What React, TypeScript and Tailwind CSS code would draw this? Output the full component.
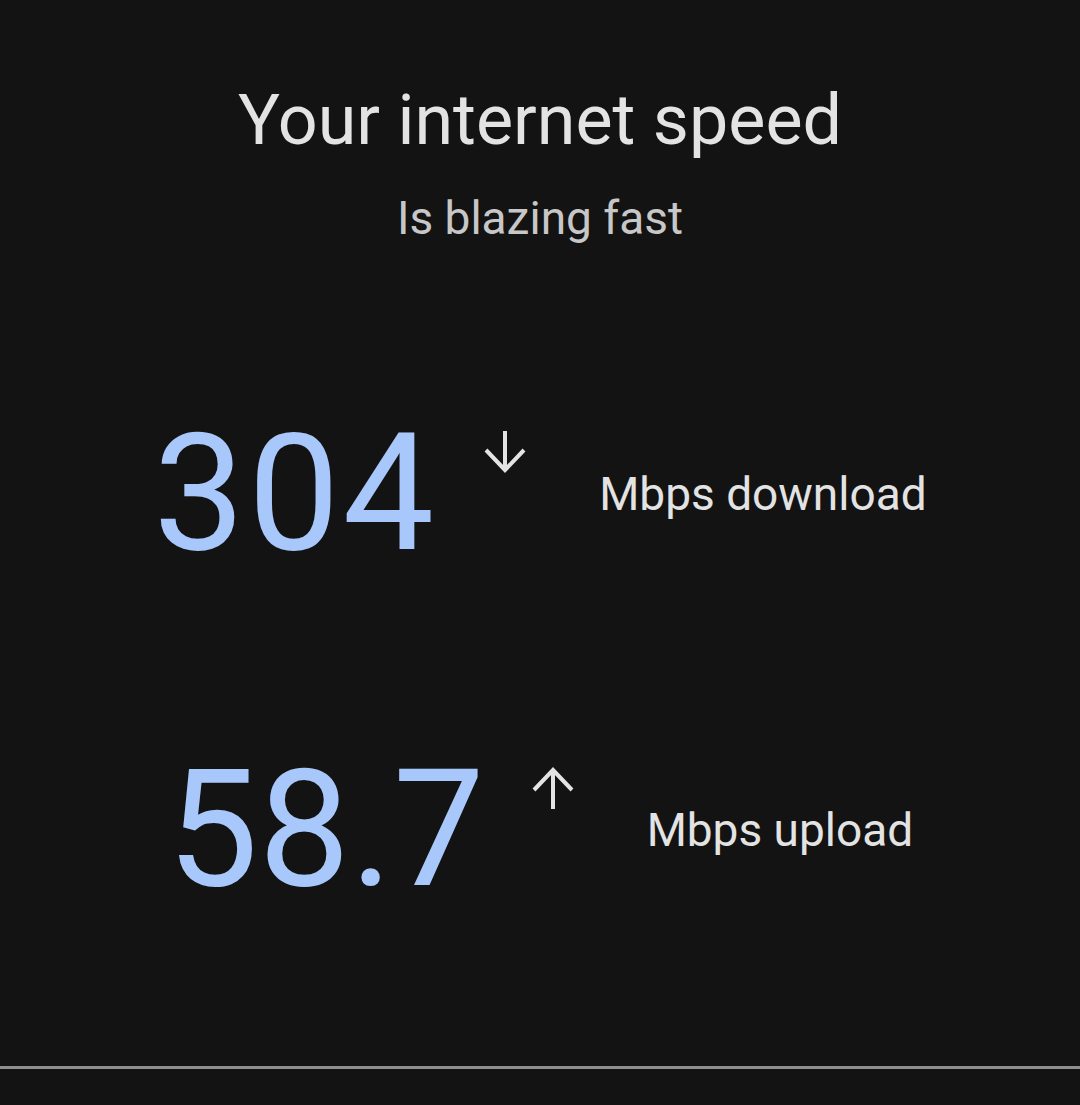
type Reading = {
  value: string
  unit: string
  dir: 'down' | 'up'
  tracking: string
}

const readings: Reading[] = [
  { value: '304', unit: 'Mbps download', dir: 'down', tracking: 'tracking-[3px]' },
  { value: '58.7', unit: 'Mbps upload', dir: 'up', tracking: 'tracking-normal' },
]

function Arrow({ dir }: { dir: 'down' | 'up' }) {
  return (
    <svg
      width="44"
      height="44"
      viewBox="0 0 44 44"
      fill="none"
      stroke="#e3e3e3"
      strokeWidth="4"
      className={dir === 'up' ? 'rotate-180' : ''}
    >
      <line x1="22" y1="1" x2="22" y2="40" />
      <polyline points="3,20 22,40 41,20" strokeLinejoin="miter" />
    </svg>
  )
}

function SpeedRow({ value, unit, dir, tracking }: Reading) {
  return (
    <div className="flex items-center justify-center">
      <span className={`text-[163px] leading-none text-[#a8c7fa] ${tracking}`}>{value}</span>
      <div className="ml-[46px] mr-[72px] self-start pt-[18px]">
        <Arrow dir={dir} />
      </div>
      <span className="text-[46px] leading-none text-[#e3e3e3]">{unit}</span>
    </div>
  )
}

export default function App() {
  return (
    <div className="flex h-[1105px] w-[1080px] flex-col bg-[#131313] font-['Roboto',sans-serif]">
      <header className="flex flex-col items-center pt-[85px]">
        <h1 className="text-[70px] leading-none text-[#e3e3e3]">Your internet speed</h1>
        <p className="mt-[40px] text-[46px] leading-none text-[#c7c7c7]">Is blazing fast</p>
      </header>
      <main className="mt-[171px] flex flex-col gap-[173px]">
        {readings.map((r) => (
          <SpeedRow key={r.dir} {...r} />
        ))}
      </main>
      <div className="mt-auto mb-[36px] h-[3px] w-full bg-[#8e8e8e]" />
    </div>
  )
}
